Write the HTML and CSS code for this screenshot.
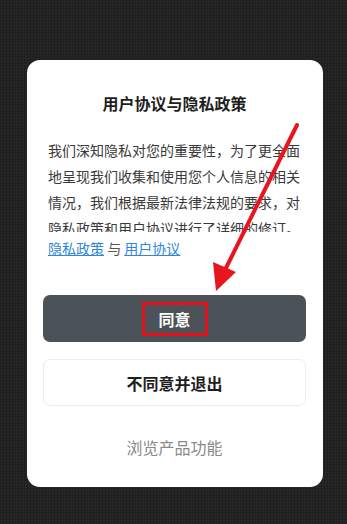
FILE: index.html
```html
<!DOCTYPE html>
<html lang="zh">
<head>
<meta charset="utf-8">
<link rel="stylesheet" href="styles.css">
</head>
<body>
<div class="screen">
  <div class="card">
    <h1 class="title">用户协议与隐私政策</h1>
    <div class="body-text">
      <p>我们深知隐私对您的重要性，为了更全面地呈现我们收集和使用您个人信息的相关情况，我们根据最新法律法规的要求，对隐私政策和用户协议进行了详细的修订。</p>
    </div>
    <div class="links"><a class="link">隐私政策</a> 与 <a class="link">用户协议</a></div>
    <button class="btn btn-primary"><span class="highlight">同意</span></button>
    <button class="btn btn-secondary">不同意并退出</button>
    <div class="browse">浏览产品功能</div>
  </div>
  <svg class="arrow" width="347" height="524" viewBox="0 0 347 524">
    <line x1="297" y1="125" x2="224" y2="272" stroke="#e8141e" stroke-width="4" stroke-linecap="round"/>
    <polygon points="216,291 213,262 236,272" fill="#e8141e"/>
  </svg>
</div>
</body>
</html>
```
FILE: styles.css
```css
* { box-sizing: border-box; }
html, body { margin: 0; padding: 0; }
body {
  width: 347px;
  height: 524px;
  overflow: hidden;
  font-family: "Noto Sans CJK SC", "Noto Sans", sans-serif;
  background-color: #232323;
  background-image:
    repeating-linear-gradient(0deg, rgba(255,255,255,0.025) 0 1px, transparent 1px 3px),
    repeating-linear-gradient(90deg, rgba(0,0,0,0.18) 0 1px, transparent 1px 3px);
}
.screen {
  position: relative;
  width: 347px;
  height: 524px;
  padding-top: 60px;
  padding-left: 27px;
}
.card {
  width: 296px;
  height: 427px;
  background: #fff;
  border-radius: 13px;
  display: flex;
  flex-direction: column;
  padding: 0 17px 0 16px;
}
.title {
  margin: 31px 0 0;
  font-size: 16px;
  line-height: 24px;
  font-weight: 700;
  color: #1e1e1e;
  text-align: center;
}
.body-text {
  margin-top: 22px;
  padding-left: 5px;
  height: 95px;
  overflow: hidden;
}
.body-text p {
  margin: 0;
  font-size: 14px;
  line-height: 26px;
  color: #3a3a3a;
  width: 253px;
}
.links {
  margin-top: 6px;
  padding-left: 5px;
  font-size: 14px;
  line-height: 20px;
  color: #555;
}
.link {
  color: #2f86d8;
  text-decoration: underline;
}
.btn {
  display: flex;
  align-items: center;
  justify-content: center;
  width: 263px;
  height: 47px;
  border-radius: 7px;
  font-family: inherit;
  font-size: 16px;
  font-weight: 700;
  padding: 0;
}
.btn-primary {
  margin-top: 37px;
  background: #4b5258;
  border: none;
  color: #fff;
}
.highlight {
  display: flex;
  align-items: center;
  justify-content: center;
  width: 66px;
  height: 34px;
  border: 3px solid #e3121d;
}
.btn-secondary {
  margin-top: 17px;
  background: #fff;
  border: 1px solid #ececec;
  color: #1e1e1e;
}
.browse {
  margin-top: 29px;
  text-align: center;
  font-size: 16px;
  line-height: 24px;
  color: #8a8a8a;
}
.arrow {
  position: absolute;
  left: 0;
  top: 0;
  pointer-events: none;
}
```
